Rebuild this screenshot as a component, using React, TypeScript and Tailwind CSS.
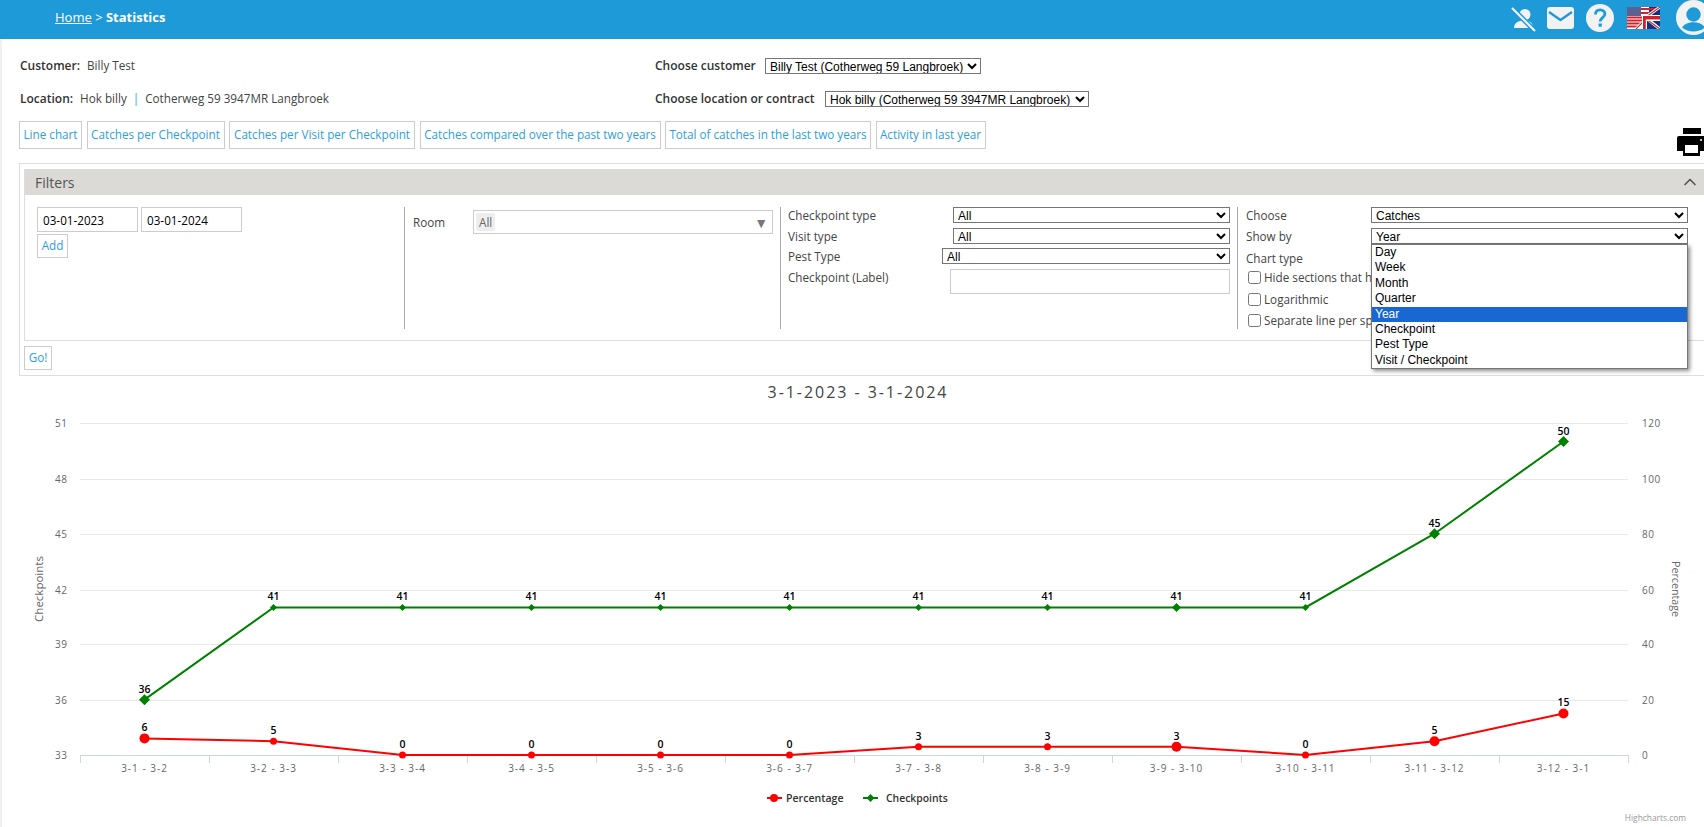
import { ChevronUp } from 'lucide-react';

const tabs = [
  { label: 'Line chart', w: 'w-[63px]' },
  { label: 'Catches per Checkpoint', w: 'w-[138px]' },
  { label: 'Catches per Visit per Checkpoint', w: 'w-[186px]' },
  { label: 'Catches compared over the past two years', w: 'w-[241px]' },
  { label: 'Total of catches in the last two years', w: 'w-[206px]' },
  { label: 'Activity in last year', w: 'w-[110px]' },
];

const showByOptions = ['Day', 'Week', 'Month', 'Quarter', 'Year', 'Checkpoint', 'Pest Type', 'Visit / Checkpoint'];

const categories = ['3-1 - 3-2', '3-2 - 3-3', '3-3 - 3-4', '3-4 - 3-5', '3-5 - 3-6', '3-6 - 3-7', '3-7 - 3-8', '3-8 - 3-9', '3-9 - 3-10', '3-10 - 3-11', '3-11 - 3-12', '3-12 - 3-1'];
const checkpoints = [36, 41, 41, 41, 41, 41, 41, 41, 41, 41, 45, 50];
const checkpointSizes = [5.5, 3.5, 3.5, 3.5, 3.5, 3.5, 3.5, 3.5, 4.5, 3.5, 5.5, 5.5];
const percentages = [6, 5, 0, 0, 0, 0, 3, 3, 3, 0, 5, 15];
const percentageSizes = [5, 3.5, 3.5, 3.5, 3.5, 3.5, 3.5, 3.5, 5, 3.5, 5, 5];

// gridline y for each left/right tick, bottom to top
const gridYs = [755.5, 700.5, 644.5, 590.5, 534.5, 479.5, 423.5];
const leftTicks = [33, 36, 39, 42, 45, 48, 51];
const rightTicks = [0, 20, 40, 60, 80, 100, 120];

const xAt = (i: number) => 80 + 129 * i + 64.5;
const yLeft = (v: number) => 755 - (v - 33) * 18.44;
const yRight = (v: number) => 755 - v * 2.767;

function Chart() {
  const greenLine = checkpoints.map((v, i) => `${xAt(i)},${yLeft(v)}`).join(' ');
  const redLine = percentages.map((v, i) => `${xAt(i)},${yRight(v)}`).join(' ');

  return (
    <svg viewBox="0 376 1704 451" className="block w-[1704px] h-[451px]">
      <text x="858" y="398" textAnchor="middle" className="fill-[#444] text-[16px] tracking-[1.95px]">3-1-2023 - 3-1-2024</text>

      {gridYs.map((y, i) => (
        <g key={y}>
          {i > 0 && <line x1="80" x2="1628" y1={y} y2={y} stroke="#e8e8e8" />}
          <text x="55" y={y + 3.5} className="fill-[#666] text-[10px] tracking-[0.5px]">{leftTicks[i]}</text>
          <text x="1642" y={y + 3.5} className="fill-[#666] text-[10px] tracking-[0.5px]">{rightTicks[i]}</text>
        </g>
      ))}

      <text transform="translate(43 589) rotate(-90)" textAnchor="middle" className="fill-[#666] text-[11.5px]">Checkpoints</text>
      <text transform="translate(1672 589) rotate(90)" textAnchor="middle" className="fill-[#666] text-[10.7px]">Percentage</text>

      <line x1="80" x2="1628" y1="755.5" y2="755.5" stroke="#ccd6eb" />
      {Array.from({ length: 13 }, (_, i) => (
        <line key={i} x1={80.5 + 129 * i} x2={80.5 + 129 * i} y1="755" y2="763" stroke="#ccd6eb" />
      ))}
      {categories.map((c, i) => (
        <text key={c} x={xAt(i)} y="772" textAnchor="middle" className="fill-[#666] text-[10px] tracking-[1px]">{c}</text>
      ))}

      <polyline points={greenLine} fill="none" stroke="#008000" strokeWidth="2" />
      <polyline points={redLine} fill="none" stroke="#ff0000" strokeWidth="2" />

      {checkpoints.map((v, i) => {
        const x = xAt(i);
        const y = yLeft(v);
        const r = checkpointSizes[i];
        return (
          <g key={i}>
            <polygon points={`${x},${y - r} ${x + r},${y} ${x},${y + r} ${x - r},${y}`} fill="#008000" />
            <text x={x} y={y - 7} textAnchor="middle" className="fill-black text-[10.5px] font-semibold stroke-white stroke-[2px] [paint-order:stroke]">{v}</text>
          </g>
        );
      })}
      {percentages.map((v, i) => {
        const x = xAt(i);
        const y = yRight(v);
        const r = percentageSizes[i];
        return (
          <g key={i}>
            <circle cx={x} cy={y} r={r} fill="#ff0000" />
            <text x={x} y={y - 7} textAnchor="middle" className="fill-black text-[10.5px] font-semibold stroke-white stroke-[2px] [paint-order:stroke]">{v}</text>
          </g>
        );
      })}

      <line x1="767" x2="782" y1="798" y2="798" stroke="#ff0000" strokeWidth="2" />
      <circle cx="774" cy="798" r="4" fill="#ff0000" />
      <text x="786" y="802" className="fill-[#333] text-[10.6px] font-semibold">Percentage</text>
      <line x1="863" x2="878" y1="798" y2="798" stroke="#008000" strokeWidth="2" />
      <polygon points="870.5,794 874.5,798 870.5,802 866.5,798" fill="#008000" />
      <text x="886" y="802" className="fill-[#333] text-[10.4px] font-semibold">Checkpoints</text>

      <text x="1686" y="821" textAnchor="end" className="fill-[#999] text-[8.4px]">Highcharts.com</text>
    </svg>
  );
}

function HeaderIcons() {
  return (
    <div className="flex items-start w-[193px] shrink-0">
      <svg viewBox="0 0 25 25" className="w-[25px] h-[25px] mt-[7px] shrink-0">
        <circle cx="14" cy="7.5" r="5.5" fill="#f2f2f2" />
        <path d="M3 21c0-5 4-7.5 10-7.5s9 2.5 9 7.5z" fill="#f2f2f2" />
        <path d="M1 1l23 23" stroke="#1e9ad8" strokeWidth="5" />
        <path d="M1 1l23 23" stroke="#f2f2f2" strokeWidth="2.2" />
      </svg>
      <svg viewBox="0 0 27 22" className="w-[27px] h-[22px] mt-[7px] ml-[11px] shrink-0">
        <rect width="27" height="22" rx="3" fill="#f2f2f2" />
        <path d="M2 5l11.5 8L25 5" fill="none" stroke="#1e9ad8" strokeWidth="2.4" />
      </svg>
      <svg viewBox="0 0 28 28" className="w-[28px] h-[28px] mt-[4px] ml-[12px] shrink-0">
        <circle cx="14" cy="14" r="14" fill="#f2f2f2" />
        <path d="M9.5 10.5c0-3 2-4.7 4.7-4.7s4.7 1.7 4.7 4.2c0 3.6-4.7 3.8-4.7 7.5" fill="none" stroke="#1e9ad8" strokeWidth="2.8" />
        <rect x="12.6" y="19.5" width="3.2" height="3.2" fill="#1e9ad8" />
      </svg>
      <svg viewBox="0 0 33 22" className="w-[33px] h-[22px] mt-[7px] ml-[13px] shrink-0">
        <rect width="33" height="22" fill="#12307a" />
        <path d="M0 0h22v8H17v14H0z" fill="#fff" />
        <path d="M0 9.5h15v2H0zM0 12.5h15v2H0zM0 15.5h15v2H0zM0 18.5h12v2H0zM14 1h14v2H14zM14 5h8v2H14z" fill="#d3202e" />
        <rect width="14" height="9" fill="#5a628f" />
        <path d="M33 0L19 10M19 12L9 22" stroke="#fff" strokeWidth="3" fill="none" />
        <path d="M19 11l14 11" stroke="#fff" strokeWidth="3" />
        <path d="M33 0L19 10M19 12l14 10M19 12L9 22" stroke="#d3202e" strokeWidth="1.1" />
        <path d="M15 8h18v6H20v8h-5z" fill="#fff" />
        <path d="M16 9h17v3.5H18.8V22H16z" fill="#d3202e" />
      </svg>
      <svg viewBox="0 0 35 35" className="w-[35px] h-[35px] ml-[16px] shrink-0">
        <circle cx="17.5" cy="17.5" r="17.5" fill="#f2f2f2" />
        <circle cx="17.5" cy="14.5" r="7.2" fill="#1e9ad8" />
        <path d="M6 27.5c2.5-3.7 6.5-5.2 11.5-5.2s9 1.5 11.5 5.2c-3 2.8-7 3.9-11.5 3.9S9 30.3 6 27.5z" fill="#1e9ad8" />
      </svg>
    </div>
  );
}

function NativeSelect({ value, className }: { value: string; className: string }) {
  return (
    <select
      defaultValue={value}
      className={`block h-[16px] shrink-0 border border-[#767676] bg-white pl-0 text-black text-[12px] leading-[14px] font-['Liberation_Sans',sans-serif] ${className}`}
    >
      <option>{value}</option>
    </select>
  );
}

export default function App() {
  return (
    <div className="w-[1704px] h-[827px] overflow-hidden bg-white shadow-[inset_2px_0_0_#f0f0f0] text-[11.7px] text-[#444] font-['Open_Sans',sans-serif]">
      <header className="flex items-center h-[39px] bg-[#1e9ad8] text-white overflow-hidden">
        <div className="flex-1 pl-[55px] pb-[4px] text-[13px] whitespace-nowrap">
          <span className="underline">Home</span> &gt; <b className="font-bold">Statistics</b>
        </div>
        <div className="self-start">
          <HeaderIcons />
        </div>
      </header>

      <div className="flex items-center h-[16px] mt-[19px] pl-[20px] whitespace-nowrap">
        <div className="w-[635px]">
          <b className="font-semibold text-[12px] text-[#333]">Customer:</b>
          <span className="ml-[7px]">Billy Test</span>
        </div>
        <b className="font-semibold text-[12px] text-[#333] w-[110px]">Choose customer</b>
        <NativeSelect value="Billy Test (Cotherweg 59 Langbroek)" className="w-[216px]" />
      </div>
      <div className="flex items-center h-[16px] mt-[17px] pl-[20px] whitespace-nowrap">
        <div className="w-[635px]">
          <b className="font-semibold text-[12px] text-[#333]">Location:</b>
          <span className="ml-[7px]">Hok billy</span>
          <span className="mx-[6px] text-[#2e9ee0]">|</span>
          <span>Cotherweg 59 3947MR Langbroek</span>
        </div>
        <b className="font-semibold text-[12px] text-[#333] w-[170px]">Choose location or contract</b>
        <NativeSelect value="Hok billy (Cotherweg 59 3947MR Langbroek)" className="w-[264px]" />
      </div>

      <div className="flex h-[28px] mt-[14px] pl-[19px]">
        <div className="flex gap-[4.5px]">
          {tabs.map((t) => (
            <a key={t.label} className={`flex items-center justify-center h-[28px] border border-[#ccc] text-[#2e9ee0] whitespace-nowrap ${t.w}`}>
              {t.label}
            </a>
          ))}
        </div>
        <svg viewBox="0 0 28 28" className="w-[28px] h-[28px] mt-[7px] ml-auto shrink-0">
          <rect x="7" y="0" width="18" height="6" fill="#000" />
          <path d="M3 8h25v15h-4v5H7v-5H1V10a2 2 0 0 1 2-2z" fill="#000" />
          <rect x="9" y="17" width="13" height="8" fill="#fff" />
          <circle cx="25" cy="12" r="1" fill="#fff" />
        </svg>
      </div>

      <section className="mt-[14px] ml-[19px] h-[213px] border-y border-l border-[#ddd] pt-[5px] pl-[4px]">
        <div className="border-l border-b border-[#ddd] h-[172px]">
          <div className="flex items-center justify-between h-[26px] pl-[10px] pr-[4px] bg-[#dbdad7] text-[14px] text-[#555]">
            <span>Filters</span>
            <ChevronUp size={20} strokeWidth={2} className="text-[#555]" />
          </div>
          <div className="flex pt-[12px]">
            <div className="w-[380px] h-[122px] border-r border-[#aaa] pl-[12px]">
              <div className="flex gap-[3px]">
                <input readOnly value="03-01-2023" className="w-[101px] h-[25px] border border-[#ccc] px-[5px] text-black" />
                <input readOnly value="03-01-2024" className="w-[101px] h-[25px] border border-[#ccc] px-[5px] text-black" />
              </div>
              <button className="block w-[31px] h-[24px] mt-[2px] border border-[#ccc] text-[#2e9ee0]">Add</button>
            </div>

            <div className="flex items-start w-[376px] h-[122px] border-r border-[#aaa] pl-[8px] pr-[6px] pt-[3px]">
              <span className="w-[60px] leading-[24px]">Room</span>
              <div className="flex items-center justify-between w-[300px] h-[24px] border border-[#ccc] pl-[2px] pr-[4px]">
                <span className="px-[3px] h-[18px] leading-[18px] bg-[#eee] rounded-[2px] text-[#666]">All</span>
                <span className="text-[#777] text-[14px]">▼</span>
              </div>
            </div>

            <div className="w-[457px] h-[122px] border-r border-[#aaa] pl-[7px] pr-[7px]">
              <div className="flex items-center justify-between h-[16px]">
                <span className="pt-[2px]">Checkpoint type</span>
                <NativeSelect value="All" className="w-[277px]" />
              </div>
              <div className="flex items-center justify-between h-[16px] mt-[5px]">
                <span className="pt-[2px]">Visit type</span>
                <NativeSelect value="All" className="w-[277px]" />
              </div>
              <div className="flex items-center justify-between h-[16px] mt-[4px]">
                <span className="pt-[2px]">Pest Type</span>
                <NativeSelect value="All" className="w-[288px]" />
              </div>
              <div className="flex items-start justify-between mt-[5px]">
                <span>Checkpoint (Label)</span>
                <input readOnly className="w-[280px] h-[25px] border border-[#ccc]" />
              </div>
            </div>

            <div className="relative flex-1 h-[122px] pl-[8px] pr-[16px]">
              <div className="flex items-center justify-between h-[16px]">
                <span className="pt-[2px]">Choose</span>
                <NativeSelect value="Catches" className="w-[317px]" />
              </div>
              <div className="flex items-center justify-between h-[16px] mt-[5px]">
                <span className="pt-[2px]">Show by</span>
                <NativeSelect value="Year" className="w-[317px] border-[#555]" />
              </div>
              <div className="h-[16px] mt-[4px] pt-[2px] leading-[16px]">Chart type</div>
              {[
                { label: 'Hide sections that h', mt: 'mt-[7px]' },
                { label: 'Logarithmic', mt: 'mt-[9px]' },
                { label: 'Separate line per sp', mt: 'mt-[8px]' },
              ].map(({ label, mt }) => (
                <label key={label} className={`flex items-center h-[13px] pl-[2px] gap-[3px] whitespace-nowrap ${mt}`}>
                  <input type="checkbox" className="m-0 w-[13px] h-[13px] shrink-0" />
                  {label}
                </label>
              ))}
              <ul className="absolute top-[37px] left-[133px] w-[317px] h-[125px] border border-[#767676] bg-white shadow-[2px_2px_4px_rgba(0,0,0,0.45)] text-black text-[12px] leading-[15.375px] font-['Liberation_Sans',sans-serif]">
                {showByOptions.map((o) => (
                  <li key={o} className={`pl-[3px] h-[15.375px] ${o === 'Year' ? 'bg-[#1967d2] text-white' : ''}`}>{o}</li>
                ))}
              </ul>
            </div>
          </div>
        </div>
        <button className="block w-[28px] h-[24px] mt-[5px] border border-[#ccc] text-[#2e9ee0]">Go!</button>
      </section>

      <Chart />
    </div>
  );
}
